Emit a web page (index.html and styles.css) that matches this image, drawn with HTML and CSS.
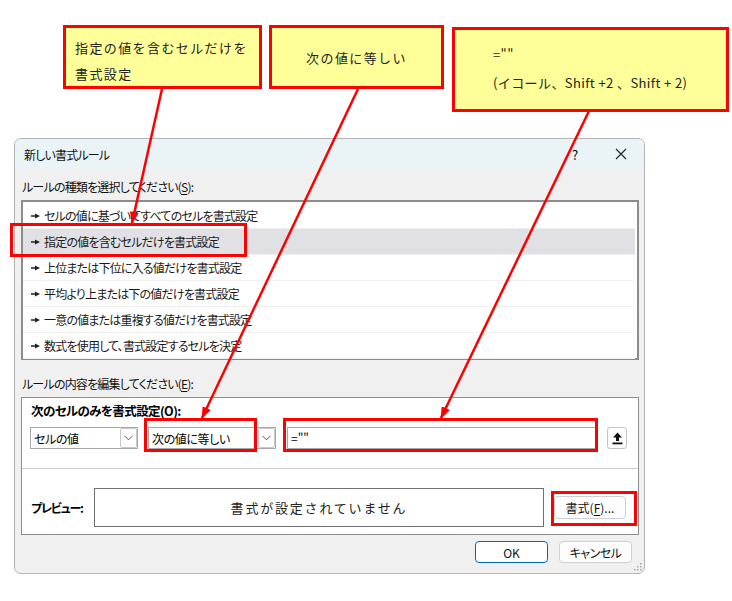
FILE: index.html
```html
<!DOCTYPE html>
<html lang="ja">
<head>
  <meta charset="UTF-8">
  <title>新しい書式ルール</title>
  <link rel="stylesheet" href="styles.css">
</head>
<body>
  <div class="stage">
    <!-- 説明用の吹き出し -->
    <div class="note note-1">指定の値を含むセルだけを<br>書式設定</div>
    <div class="note note-2">次の値に等しい</div>
    <div class="note note-3">
      <div class="note-line">=""</div>
      <div class="note-line">(イコール、Shift +2 、Shift + 2)</div>
    </div>

    <div class="dialog">
      <div class="titlebar">
        <span class="title">新しい書式ルール</span>
        <div class="tb-btns">
          <span class="tb-help">?</span>
          <span class="tb-close">
            <svg width="12" height="12" viewBox="0 0 12 12"><path d="M1 1 L11 11 M11 1 L1 11" stroke="#222" stroke-width="1.1" fill="none"/></svg>
          </span>
        </div>
      </div>

      <div class="dlg-body">
        <div class="label label-top">ルールの種類を選択してください(<u>S</u>):</div>
        <div class="rule-list">
          <div class="rule-row"><svg class="bullet" width="9" height="6" viewBox="0 0 9 6"><path d="M0 2.3 H4 V0.6 L9 3 L4 5.4 V3.7 H0 Z" fill="#222"/></svg>セルの値に基づいてすべてのセルを書式設定</div>
          <div class="rule-row is-selected"><svg class="bullet" width="9" height="6" viewBox="0 0 9 6"><path d="M0 2.3 H4 V0.6 L9 3 L4 5.4 V3.7 H0 Z" fill="#222"/></svg>指定の値を含むセルだけを書式設定</div>
          <div class="rule-row"><svg class="bullet" width="9" height="6" viewBox="0 0 9 6"><path d="M0 2.3 H4 V0.6 L9 3 L4 5.4 V3.7 H0 Z" fill="#222"/></svg>上位または下位に入る値だけを書式設定</div>
          <div class="rule-row"><svg class="bullet" width="9" height="6" viewBox="0 0 9 6"><path d="M0 2.3 H4 V0.6 L9 3 L4 5.4 V3.7 H0 Z" fill="#222"/></svg>平均より上または下の値だけを書式設定</div>
          <div class="rule-row"><svg class="bullet" width="9" height="6" viewBox="0 0 9 6"><path d="M0 2.3 H4 V0.6 L9 3 L4 5.4 V3.7 H0 Z" fill="#222"/></svg>一意の値または重複する値だけを書式設定</div>
          <div class="rule-row"><svg class="bullet" width="9" height="6" viewBox="0 0 9 6"><path d="M0 2.3 H4 V0.6 L9 3 L4 5.4 V3.7 H0 Z" fill="#222"/></svg>数式を使用して、書式設定するセルを決定</div>
        </div>

        <div class="label label-mid">ルールの内容を編集してください(<u>E</u>):</div>
        <div class="edit-panel">
          <div class="panel-head">次のセルのみを書式設定(<u>O</u>):</div>
          <div class="cond-row">
            <div class="combo combo-1">
              <span class="combo-text">セルの値</span>
              <span class="combo-drop"><svg width="9" height="6" viewBox="0 0 9 6"><path d="M0.5 0.8 L4.5 4.8 L8.5 0.8" stroke="#555" stroke-width="1" fill="none"/></svg></span>
            </div>
            <div class="combo combo-2">
              <span class="combo-text">次の値に等しい</span>
              <span class="combo-drop"><svg width="9" height="6" viewBox="0 0 9 6"><path d="M0.5 0.8 L4.5 4.8 L8.5 0.8" stroke="#555" stroke-width="1" fill="none"/></svg></span>
            </div>
            <div class="value-box">=""</div>
            <span class="ref-btn">
              <svg width="11" height="13" viewBox="0 0 11 13"><path d="M5.5 0.5 L10 5.5 H7 V9 H4 V5.5 H1 Z" fill="#111"/><rect x="0.5" y="10.5" width="10" height="1.8" fill="#111"/></svg>
            </span>
          </div>
          <div class="preview-row">
            <span class="preview-label">プレビュー:</span>
            <div class="preview-box">書式が設定されていません</div>
            <button class="btn btn-format">書式(<u>F</u>)...</button>
          </div>
        </div>

        <div class="footer">
          <button class="btn btn-ok">OK</button>
          <button class="btn btn-cancel">キャンセル</button>
        </div>
      </div>
      <svg class="grip" width="8" height="8" viewBox="0 0 8 8">
        <rect x="6" y="0" width="1.5" height="1.5" fill="#aaa"/>
        <rect x="3" y="3" width="1.5" height="1.5" fill="#aaa"/>
        <rect x="6" y="3" width="1.5" height="1.5" fill="#aaa"/>
        <rect x="0" y="6" width="1.5" height="1.5" fill="#aaa"/>
        <rect x="3" y="6" width="1.5" height="1.5" fill="#aaa"/>
        <rect x="6" y="6" width="1.5" height="1.5" fill="#aaa"/>
      </svg>
    </div>

    <!-- 赤枠 -->
    <div class="mark mark-row"></div>
    <div class="mark mark-op"></div>
    <div class="mark mark-val"></div>
    <div class="mark mark-fmt"></div>

    <!-- 矢印 -->
    <svg class="arrows" width="732" height="601" viewBox="0 0 732 601">
      <defs>
        <marker id="ah" markerUnits="userSpaceOnUse" viewBox="0 0 12 9" refX="11" refY="4.5" markerWidth="12" markerHeight="9" orient="auto">
          <path d="M0 0 L12 4.5 L0 9 Z" fill="#ff0000"/>
        </marker>
      </defs>
      <line x1="162" y1="89" x2="132" y2="223" stroke="#ff0000" stroke-width="2.5" marker-end="url(#ah)"/>
      <line x1="358" y1="89" x2="202" y2="418" stroke="#ff0000" stroke-width="2.5" marker-end="url(#ah)"/>
      <line x1="589" y1="111" x2="441" y2="418" stroke="#ff0000" stroke-width="2.5" marker-end="url(#ah)"/>
    </svg>
  </div>
</body>
</html>
```

FILE: styles.css
```css
body {
  margin: 0;
  background: #fff;
  font-family: 'Noto Sans CJK JP', 'Noto Sans', sans-serif;
  color: #000;
}
.stage {
  position: relative;
  width: 732px;
  height: 601px;
  overflow: hidden;
  background: #fff;
}
u {
  text-decoration: underline;
  text-underline-offset: 2px;
}

/* 吹き出し */
.note {
  position: absolute;
  box-sizing: border-box;
  background: #ffff99;
  border: 3px solid #ff0000;
  font-size: 13px;
  letter-spacing: 1.4px;
  color: #222;
  z-index: 2;
}
.note-1 {
  left: 63px;
  top: 25px;
  width: 199px;
  height: 64px;
  padding: 7px 0 0 9px;
  line-height: 26px;
}
.note-2 {
  left: 269px;
  top: 25px;
  width: 175px;
  height: 64px;
  display: flex;
  align-items: center;
  justify-content: center;
}
.note-3 {
  left: 452px;
  top: 27px;
  width: 277px;
  height: 85px;
  padding: 11px 0 0 38px;
  letter-spacing: 0.4px;
}
.note-line {
  line-height: 28px;
}

/* ダイアログ */
.dialog {
  position: relative;
  box-sizing: border-box;
  width: 631px;
  height: 436px;
  margin: 138px 0 0 14px;
  background: #f0f0f0;
  border: 1px solid #b4b4b4;
  border-radius: 7px;
  overflow: hidden;
  font-size: 12px;
  font-feature-settings: "palt";
}
.titlebar {
  display: flex;
  align-items: center;
  height: 30px;
  padding-left: 9px;
  background: #eaf3f6;
}
.title {
  color: #111;
  letter-spacing: -0.8px;
}
.tb-btns {
  display: flex;
  align-items: center;
  margin-left: auto;
  gap: 13px;
}
.tb-help {
  width: 20px;
  text-align: center;
  font-size: 13px;
}
.tb-close {
  width: 46px;
  display: flex;
  justify-content: center;
}
.dlg-body {
  padding: 0 5px 0 6px;
}
.label {
  line-height: 18px;
  color: #111;
  letter-spacing: -0.8px;
}
.label-top {
  padding: 9px 0 0 1px;
  margin-bottom: 4px;
}
.label-mid {
  padding: 15px 0 0 1px;
  margin-bottom: 4px;
}
.rule-list {
  box-sizing: border-box;
  height: 160px;
  background: #fff;
  border: 2px solid #8c8c8c;
  padding: 1px 2px 0 0;
}
.rule-row {
  box-sizing: border-box;
  display: flex;
  align-items: center;
  height: 26px;
  padding-left: 8px;
  border-bottom: 1px solid #f0f0f0;
  color: #1a1a1a;
  letter-spacing: -0.8px;
}
.rule-row.is-selected {
  background: #e1e0e5;
}
.bullet {
  margin-right: 4px;
}
.edit-panel {
  box-sizing: border-box;
  height: 138px;
  background: #fff;
  border: 1px solid #8e8e8e;
}
.panel-head {
  padding: 4px 0 0 9px;
  line-height: 18px;
  font-weight: bold;
  font-size: 12.5px;
  letter-spacing: -0.6px;
}
.cond-row {
  display: flex;
  align-items: center;
  margin-top: 7px;
  padding-left: 8px;
  height: 22px;
}
.combo {
  box-sizing: border-box;
  display: flex;
  align-items: center;
  height: 22px;
  border: 1px solid #a8a8a8;
  background: #fff;
}
.combo-1 {
  width: 108px;
}
.combo-2 {
  width: 128px;
  margin-left: 10px;
}
.combo-text {
  flex: 1;
  padding-left: 3px;
  letter-spacing: -0.4px;
}
.combo-drop {
  box-sizing: border-box;
  display: flex;
  align-items: center;
  justify-content: center;
  width: 17px;
  height: 20px;
  border: 1px solid #c9c9c9;
  border-radius: 2px;
}
.value-box {
  box-sizing: border-box;
  width: 309px;
  height: 22px;
  margin-left: 11px;
  padding-left: 3px;
  border: 1px solid #a8a8a8;
  line-height: 20px;
}
.ref-btn {
  box-sizing: border-box;
  display: flex;
  align-items: center;
  justify-content: center;
  width: 20px;
  height: 22px;
  margin-left: 11px;
  border: 1px solid #c4c4c4;
  border-radius: 3px;
  background: #fdfdfd;
}
.preview-row {
  display: flex;
  align-items: center;
  margin-top: 19px;
  padding: 19px 0 0 9px;
  border-top: 1px solid #cfcfcf;
}
.preview-label {
  width: 63px;
  font-weight: bold;
  font-size: 12px;
  letter-spacing: -1.2px;
}
.preview-box {
  box-sizing: border-box;
  display: flex;
  align-items: center;
  justify-content: center;
  width: 450px;
  height: 39px;
  border: 1px solid #707070;
  font-size: 13px;
  letter-spacing: 1.8px;
  font-feature-settings: normal;
  color: #222;
}
.btn {
  box-sizing: border-box;
  height: 23px;
  padding: 0;
  background: #fdfdfd;
  border: 1px solid #d0d0d0;
  border-radius: 4px;
  font-family: inherit;
  font-size: 12px;
  font-feature-settings: "palt";
  color: #111;
}
.btn-format {
  width: 72px;
  margin-left: 10px;
}
.footer {
  display: flex;
  justify-content: flex-end;
  gap: 11px;
  margin-top: 6px;
  padding-right: 7px;
}
.btn-ok {
  width: 73px;
  height: 22px;
  border-color: #0067c0;
  background: #fff;
}
.btn-cancel {
  width: 73px;
  height: 22px;
  letter-spacing: -0.5px;
}
.grip {
  position: absolute;
  right: 2px;
  bottom: 2px;
}

/* 赤枠 */
.mark {
  position: absolute;
  box-sizing: border-box;
  border: 3px solid #ff0000;
  z-index: 2;
}
.mark-row {
  left: 10px;
  top: 223px;
  width: 237px;
  height: 34px;
}
.mark-op {
  left: 144px;
  top: 418px;
  width: 113px;
  height: 34px;
}
.mark-val {
  left: 283px;
  top: 418px;
  width: 315px;
  height: 34px;
}
.mark-fmt {
  left: 551px;
  top: 491px;
  width: 86px;
  height: 35px;
}
.arrows {
  position: absolute;
  left: 0;
  top: 0;
  z-index: 3;
}
```
